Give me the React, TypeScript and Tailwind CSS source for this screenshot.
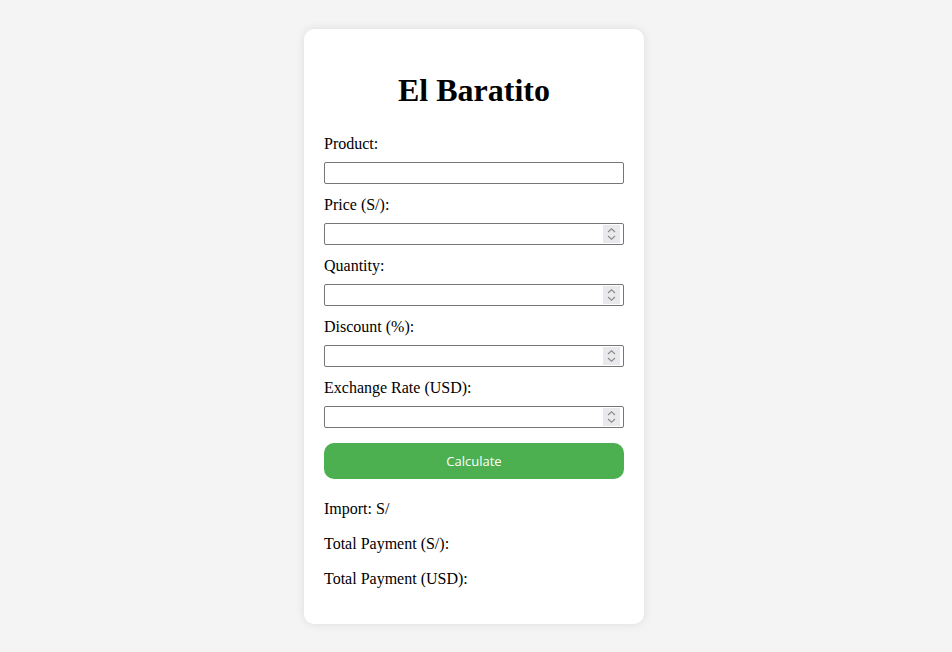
import React from "react";

function Spinner() {
  return (
    <div className="w-[17px] h-[18px] my-auto mr-[3px] bg-[#e9e9ed] flex items-center justify-center">
      <svg width="9" height="14" viewBox="0 0 9 14" fill="none" stroke="#8a8a8a" strokeWidth="1.1">
        <path d="M1 5 L4.5 1.8 L8 5" />
        <path d="M1 9 L4.5 12.2 L8 9" />
      </svg>
    </div>
  );
}

function Field({ label, number }: { label: string; number?: boolean }) {
  return (
    <div className="flex flex-col">
      <label className="block h-[19px] leading-[19px] text-[16px] text-black">{label}</label>
      <div className="mt-[9px] h-[22px] w-full flex border border-[#767676] rounded-[2px] bg-white">
        <input type="text" className="flex-1 min-w-0 h-full outline-none px-[2px] text-[13px] bg-transparent" />
        {number && <Spinner />}
      </div>
    </div>
  );
}

export default function App() {
  return (
    <div
      className="min-h-[652px] w-full bg-[#f4f4f4] flex justify-center pt-[29px] pr-[4px]"
      style={{ fontFamily: '"Liberation Serif", serif' }}
    >
      <div className="w-[340px] h-[595px] bg-white rounded-[10px] shadow-[0_0_10px_rgba(0,0,0,0.1)] px-[20px] pt-[20px] flex flex-col">
        <h1 className="text-[32px] font-bold text-center leading-[38px] mt-[22px] text-black">El Baratito</h1>
        <div className="mt-[25px] flex flex-col gap-[11px]">
          <Field label="Product:" />
          <Field label="Price (S/):" number />
          <Field label="Quantity:" number />
          <Field label="Discount (%):" number />
          <Field label="Exchange Rate (USD):" number />
        </div>
        <button
          className="mt-[15px] h-[36px] w-full rounded-[10px] bg-[#4caf50] text-white text-[13px] pt-[2px]"
          style={{ fontFamily: '"Open Sans", "Noto Sans", sans-serif' }}
        >
          Calculate
        </button>
        <div className="mt-[20px] flex flex-col gap-[16px] text-[16px] text-black">
          <p className="leading-[19px]">Import: S/</p>
          <p className="leading-[19px]">Total Payment (S/):</p>
          <p className="leading-[19px]">Total Payment (USD):</p>
        </div>
      </div>
    </div>
  );
}
